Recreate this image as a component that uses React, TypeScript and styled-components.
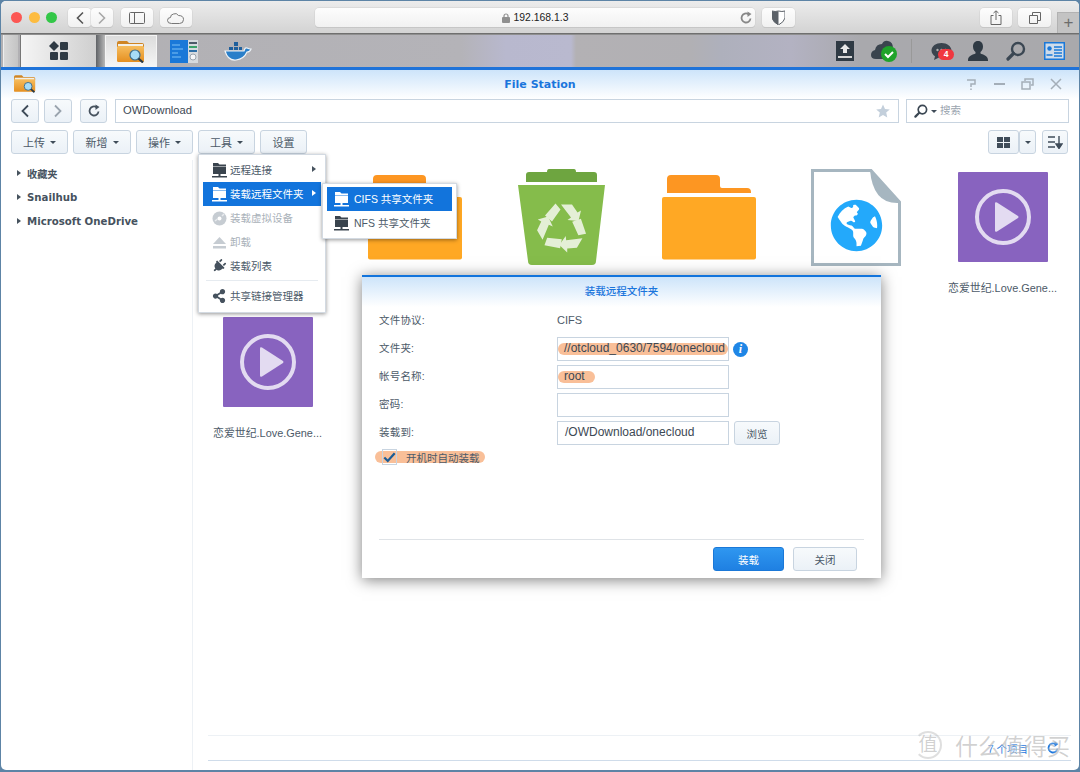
import React from 'react';
import styled, { createGlobalStyle } from 'styled-components';
import { FaGlobeAmericas, FaPlug, FaShareAlt } from 'react-icons/fa';

const CJK = `"Liberation Sans", "Noto Sans CJK SC", sans-serif`;
const WIDE = `"DejaVu Sans", "Noto Sans CJK SC", sans-serif`;

const GlobalStyle = createGlobalStyle`
    html, body {
        margin: 0;
        padding: 0;
        background: #5d84a6;
        overflow: hidden;
    }
    * {
        box-sizing: border-box;
    }
`;

const Page = styled.div`
    width: 1080px;
    height: 772px;
    padding: 1px 1px 2px;
    font-family: ${CJK};
    color: #4c5a68;
`;

const Shell = styled.div`
    height: 100%;
    display: flex;
    flex-direction: column;
    background: #fff;
    border-radius: 5px;
    overflow: hidden;
`;

/* safari chrome */
const SafariBar = styled.div`
    height: 33px;
    flex: none;
    display: flex;
    align-items: flex-start;
    padding: 7px 0 0 10px;
    background: linear-gradient(#ececec, #d3d3d3);
    border-bottom: 1px solid #6f6f6f;
    position: relative;
`;

const Lights = styled.div`
    display: flex;
    gap: 6.5px;
    margin: 3.5px 11px 0 0;
`;

const Light = styled.span<{ $c: string }>`
    width: 11px;
    height: 11px;
    border-radius: 50%;
    background: ${(p) => p.$c};
`;

const SafariBtn = styled.div<{ $w: number; $ml?: number }>`
    width: ${(p) => p.$w}px;
    height: 19px;
    margin-left: ${(p) => p.$ml ?? 0}px;
    flex: none;
    display: flex;
    align-items: center;
    justify-content: center;
    background: linear-gradient(#fdfdfd, #f1f1f1);
    border-radius: 4px;
    box-shadow: 0 0 0 0.5px #cfcfcf, 0 1px 0 #bdbdbd;
`;

const AddressBar = styled(SafariBtn)`
    position: relative;
    gap: 4px;
    font-size: 10.4px;
    color: #222;
`;

const Reload = styled.span`
    position: absolute;
    right: 2px;
    top: 3px;
    display: flex;
`;

const NewTab = styled.div`
    position: absolute;
    right: 0;
    top: 11px;
    width: 22px;
    height: 21px;
    background: #c3c3c3;
    border: 1px solid #b2b2b2;
    border-right: 0;
    border-bottom: 0;
    color: #6c6c6c;
    font-size: 17px;
    line-height: 19px;
    text-align: center;
`;

/* dsm taskbar */
const Taskbar = styled.div`
    height: 36px;
    flex: none;
    display: flex;
    align-items: stretch;
    background: linear-gradient(
        90deg,
        #b1b0b3 0,
        #b4b3b8 460px,
        #b8b8ce 505px,
        #b9b9cf 570px,
        #b3b1b4 575px,
        #b1b0b4 690px,
        #aeb0bc 720px,
        #b3b2c2 790px,
        #a9a9ad 860px,
        #a9a9ac 100%
    );
    border-top: 1px solid #8f8f8f;
    border-bottom: 3px solid #1f73d9;
`;

const ShortTile = styled.div`
    width: 15px;
    margin-left: 2px;
    background: linear-gradient(90deg, #d8d8d8, #c4c4c4);
    border-left: 1px solid #eee;
`;

const MainTile = styled.div`
    width: 76px;
    margin-left: 2px;
    display: flex;
    align-items: center;
    justify-content: center;
    background: linear-gradient(90deg, #f5f5f5, #cfcfcf);
    border-left: 1px solid #777;
`;

const TileGap = styled.div`
    width: 9px;
    background: linear-gradient(90deg, #5f6266, #b8b8b8);
`;

const ActiveTile = styled.div`
    width: 52px;
    display: flex;
    align-items: center;
    justify-content: center;
    background: linear-gradient(#dcdcdc, #f6f6f6);
    border: 1px solid #f4f4f4;
    border-bottom: 0;
`;

const AppSlot = styled.div`
    width: 54px;
    display: flex;
    align-items: center;
    justify-content: center;
`;

const Tray = styled.div`
    margin-left: auto;
    display: flex;
    align-items: center;
    padding-right: 14px;
`;

const TrayIcon = styled.div<{ $w: number; $ml?: number }>`
    width: ${(p) => p.$w}px;
    height: 26px;
    margin-left: ${(p) => p.$ml ?? 0}px;
    position: relative;
    display: flex;
    align-items: center;
    justify-content: center;
`;

const TrayDivider = styled.div`
    width: 1px;
    height: 24px;
    margin-left: 14px;
    background: #999;
`;

const Badge = styled.span`
    position: absolute;
    left: 8px;
    top: 11px;
    width: 16px;
    height: 11px;
    border-radius: 6px;
    background: #f0373f;
    color: #fff;
    font-size: 8.5px;
    font-weight: 700;
    line-height: 11px;
    text-align: center;
`;

/* file station window */
const FileWindow = styled.div`
    flex: 1;
    min-height: 0;
    display: flex;
    flex-direction: column;
    position: relative;
`;

const TitleBar = styled.div`
    height: 29px;
    flex: none;
    display: flex;
    align-items: center;
    justify-content: center;
    position: relative;
    background: linear-gradient(#cde4fa, #ffffff);
`;

const TitleIcon = styled.span`
    position: absolute;
    left: 13px;
    top: 5px;
    display: flex;
`;

const TitleText = styled.div`
    font-family: ${WIDE};
    font-size: 11px;
    font-weight: 700;
    color: #1a75dc;
`;

const WinActions = styled.div`
    position: absolute;
    right: 16px;
    top: 7px;
    display: flex;
    gap: 14px;
`;

const PathRow = styled.div`
    height: 24px;
    flex: none;
    display: flex;
    padding: 0 10px;
`;

const Square = styled.div<{ $ml?: number; $w?: number }>`
    width: ${(p) => p.$w ?? 28}px;
    height: 24px;
    margin-left: ${(p) => p.$ml ?? 0}px;
    flex: none;
    display: flex;
    align-items: center;
    justify-content: center;
    background: linear-gradient(#f7fafc, #ebf1f7);
    border: 1px solid #c8d4e0;
    border-radius: 3px;
`;

const PathField = styled.div`
    flex: 1;
    margin-left: 8px;
    padding: 0 8px 0 7px;
    display: flex;
    align-items: center;
    justify-content: space-between;
    background: #fff;
    border: 1px solid #c8d4e0;
    font-size: 11.2px;
    color: #3c4854;
`;

const PathText = styled.span`
    padding-bottom: 2px;
`;

const SearchField = styled.div`
    width: 163px;
    margin-left: 7px;
    padding-left: 7px;
    display: flex;
    align-items: center;
    gap: 3px;
    border: 1px solid #c8d4e0;
    font-size: 10.5px;
    color: #9aa4ae;
`;

const SearchHint = styled.span`
    padding-bottom: 3px;
`;

const ToolRow = styled.div`
    height: 24px;
    flex: none;
    margin-top: 7px;
    display: flex;
    gap: 5px;
    padding: 0 11px 0 10px;
`;

const ToolBtn = styled.div<{ $w: number }>`
    width: ${(p) => p.$w}px;
    display: flex;
    align-items: center;
    justify-content: center;
    gap: 5px;
    background: linear-gradient(#f7fafc, #ebf1f7);
    border: 1px solid #c8d4e0;
    border-radius: 3px;
    font-size: 11px;
    color: #4c5a68;
`;

const Caret = styled.span<{ $c?: string }>`
    width: 0;
    height: 0;
    border-left: 3px solid transparent;
    border-right: 3px solid transparent;
    border-top: 3px solid ${(p) => p.$c ?? '#3f4c59'};
`;

const ToolRight = styled.div`
    margin-left: auto;
    display: flex;
`;

const Body = styled.div`
    flex: 1;
    min-height: 0;
    display: flex;
`;

const Sidebar = styled.div`
    width: 192px;
    flex: none;
    margin-top: 6px;
    padding-top: 1px;
    border-right: 1px solid #edf1f5;
`;

const TreeItem = styled.div`
    height: 24px;
    padding-left: 16px;
    display: flex;
    align-items: center;
    gap: 6px;
    font-family: ${WIDE};
    font-size: 10.2px;
    font-weight: 700;
    color: #46525e;
`;

const TreeArrow = styled.span<{ $c?: string }>`
    width: 0;
    height: 0;
    border-top: 3.5px solid transparent;
    border-bottom: 3.5px solid transparent;
    border-left: 4px solid ${(p) => p.$c ?? '#46525e'};
`;

const Main = styled.div`
    flex: 1;
    min-width: 0;
    display: flex;
    flex-direction: column;
`;

const FileGrid = styled.div`
    flex: 1;
    display: grid;
    grid-template-columns: repeat(6, 147px);
    grid-auto-rows: 145px;
    padding: 6px 0 0 1px;
`;

const FileCell = styled.div`
    padding-top: 7px;
    display: flex;
    flex-direction: column;
    align-items: center;
`;

const FileThumb = styled.div`
    height: 100px;
    display: flex;
    align-items: center;
    justify-content: center;
`;

const FileName = styled.div`
    margin-top: 13px;
    font-size: 10.9px;
    line-height: 16px;
    white-space: nowrap;
    color: #4c5a68;
`;

const StatusBar = styled.div`
    height: 26px;
    flex: none;
    margin: 0 8px 9px 15px;
    display: flex;
    align-items: center;
    justify-content: flex-end;
    gap: 18px;
    padding-right: 11px;
    border-top: 1px solid #edf1f5;
    border-bottom: 1px solid #cfdcea;
    font-size: 10.5px;
    color: #1a75dc;
`;

const Watermark = styled.div`
    position: absolute;
    right: 9px;
    bottom: 8px;
    display: flex;
    align-items: center;
    gap: 13px;
    font-size: 23px;
    color: rgba(110, 110, 110, 0.32);
    text-shadow: 0 0 2px rgba(255, 255, 255, 0.9);
`;

const WatermarkSeal = styled.span`
    width: 28px;
    height: 28px;
    border: 2px solid rgba(140, 140, 140, 0.28);
    border-left-color: transparent;
    border-radius: 50%;
    font-size: 19px;
    line-height: 23px;
    text-align: center;
`;

/* menus */
const Menu = styled.div`
    position: absolute;
    left: 197px;
    top: 84px;
    width: 128px;
    height: 159px;
    padding: 3px 4px;
    background: #fff;
    border: 1px solid #d3dae2;
    box-shadow: 0 1px 4px rgba(0, 0, 0, 0.42);
    z-index: 3;
`;

const MenuRow = styled.div<{ $active?: boolean; $off?: boolean }>`
    height: 24px;
    padding: 0 5px 2px 9px;
    display: flex;
    align-items: center;
    gap: 3px;
    font-size: 10.5px;
    white-space: nowrap;
    background: ${(p) => (p.$active ? '#1274dc' : 'transparent')};
    color: ${(p) => (p.$active ? '#fff' : p.$off ? '#a9b1b9' : '#4c5a68')};
`;

const MenuRule = styled.div`
    height: 1px;
    margin: 2px 3px 3px;
    background: #e6ebf0;
`;

const RowArrow = styled.span`
    margin-left: auto;
    display: flex;
`;

const SubMenu = styled(Menu)`
    left: 321px;
    top: 113px;
    width: 135px;
    height: 56px;
    z-index: 4;
`;

const SubRow = styled(MenuRow)`
    gap: 5px;
    padding-left: 7px;
`;

/* mount dialog */
const Dialog = styled.div`
    position: absolute;
    left: 361px;
    top: 205px;
    width: 519px;
    height: 303px;
    display: flex;
    flex-direction: column;
    background: #fff;
    border-top: 2px solid #1274dc;
    box-shadow: 0 2px 14px rgba(0, 0, 0, 0.5);
    z-index: 2;
`;

const DialogHead = styled.div`
    height: 30px;
    flex: none;
    padding-bottom: 3px;
    display: flex;
    align-items: center;
    justify-content: center;
    background: linear-gradient(#cde4fa, #ffffff);
    font-size: 10.5px;
    font-weight: 500;
    color: #1a75dc;
`;

const DialogForm = styled.div`
    flex: 1;
    padding: 2px 17px 0;
    display: flex;
    flex-direction: column;
`;

const FormRow = styled.div`
    height: 24px;
    margin-bottom: 4px;
    display: flex;
    align-items: center;
    font-size: 10.5px;
`;

const FormLabel = styled.div`
    width: 178px;
    flex: none;
    padding-bottom: 4px;
    color: #4c5a68;
    letter-spacing: 0.2px;
`;

const FormValue = styled.div`
    padding-bottom: 3px;
    font-size: 11px;
    color: #4c5a68;
`;

const Field = styled.div`
    width: 172px;
    height: 24px;
    flex: none;
    display: flex;
    align-items: center;
    border: 1px solid #c8d4e0;
    font-size: 12px;
    color: #3c4854;
    white-space: nowrap;
    overflow: hidden;
`;

const Plain = styled.span`
    padding: 0 0 3px 7px;
`;

const Marked = styled.span<{ $w: string }>`
    width: ${(p) => p.$w};
    height: 12px;
    flex: none;
    padding-left: 6px;
    border-radius: 6px;
    background: #f9bf98;
    line-height: 11px;
`;

const InfoDot = styled.span`
    width: 15px;
    height: 15px;
    margin-left: 4px;
    border-radius: 50%;
    background: #1f86e6;
    color: #fff;
    font-family: "Liberation Serif", serif;
    font-style: italic;
    font-weight: 700;
    font-size: 12px;
    line-height: 15px;
    text-align: center;
`;

const BrowseBtn = styled(ToolBtn)`
    height: 24px;
    margin-left: 5px;
    font-size: 10.5px;
`;

const CheckRow = styled.div`
    width: 110px;
    height: 12px;
    margin: 2px 0 0 -4px;
    display: flex;
    align-items: center;
    border-radius: 6px;
    background: #f9bf98;
    font-size: 10.5px;
    color: #4c5a68;
`;

const CheckBox = styled.span`
    width: 15px;
    height: 16px;
    margin-left: 7px;
    margin-right: 9px;
    display: flex;
    align-items: center;
    justify-content: center;
    border: 1px solid #c8d4e0;
`;

const DialogFoot = styled.div`
    height: 39px;
    flex: none;
    margin: 0 17px 0;
    display: flex;
    justify-content: flex-end;
    align-items: flex-start;
    gap: 9px;
    padding: 7px 7px 0 0;
    border-top: 1px solid #dfe3e7;
`;

const PrimaryBtn = styled.div`
    width: 71px;
    height: 24px;
    display: flex;
    align-items: center;
    justify-content: center;
    border-radius: 3px;
    border: 1px solid #1a78d8;
    background: linear-gradient(#2f97f0, #1f80e2);
    color: #fff;
    font-size: 10.5px;
`;

const FootBtn = styled(ToolBtn)`
    height: 24px;
    font-size: 10.5px;
`;

/* drawings */
const Chevron = ({ dir, c = '#555', s = 1.6 }: { dir: 'l' | 'r'; c?: string; s?: number }) => (
    <svg width="10" height="14" viewBox="0 0 10 14">
        <path d={dir === 'l' ? 'M8 1.5 2.5 7 8 12.5' : 'M2 1.5 7.5 7 2 12.5'} fill="none" stroke={c} strokeWidth={s} />
    </svg>
);

const Magnifier = ({ size = 20, c = '#3b4753' }: { size?: number; c?: string }) => (
    <svg width={size} height={size} viewBox="0 0 20 20">
        <circle cx="12" cy="8" r="6" fill="none" stroke={c} strokeWidth="2.4" />
        <path d="M7.5 12.5 2 18" stroke={c} strokeWidth="3.2" strokeLinecap="round" />
    </svg>
);

const FolderSearch = ({ w = 28, h = 22 }: { w?: number; h?: number }) => (
    <svg width={w} height={h} viewBox="0 0 28 22">
        <defs>
            <linearGradient id="fs" x1="0" y1="0" x2="0" y2="1">
                <stop offset="0" stopColor="#f6bd5e" />
                <stop offset="1" stopColor="#e58f20" />
            </linearGradient>
        </defs>
        <path d="M0 2q0-2 2-2h8l2 2h13q2 0 2 2v2H0z" fill="#cf8524" />
        <rect x="1" y="3" width="25" height="3" fill="#f3f0e8" />
        <rect x="0" y="5" width="27" height="16" rx="1.5" fill="url(#fs)" />
        <circle cx="18" cy="14" r="5" fill="#a6dcf7" stroke="#3f6f8e" strokeWidth="1.2" />
        <path d="M21.5 17.5 26 21.5" stroke="#2c3a44" strokeWidth="2.2" />
    </svg>
);

const MainMenuIcon = () => (
    <svg width="20" height="20" viewBox="0 0 20 20">
        <path d="M5 0 10 5 5 10 0 5z" fill="#2f3a44" />
        <rect x="11" y="1" width="8" height="8" rx="1" fill="#2f3a44" />
        <rect x="1" y="11" width="8" height="8" rx="1" fill="#2f3a44" />
        <rect x="11" y="11" width="8" height="8" rx="1" fill="#2f3a44" />
    </svg>
);

const EditorIcon = () => (
    <svg width="28" height="23" viewBox="0 0 28 23">
        <rect width="18" height="23" fill="#1a78d8" />
        <rect x="18" width="10" height="23" fill="#d6dade" />
        <path d="M2 5h8M2 9h11M2 13h6M2 17h9" stroke="#7cc0f5" strokeWidth="1" />
        <rect x="19" y="2" width="8" height="2" fill="#4c5a68" />
        <rect x="19" y="6" width="8" height="2" fill="#3aa36a" />
        <rect x="19" y="10" width="8" height="2" fill="#2d6fa8" />
        <circle cx="23" cy="17" r="3" fill="#f4f6f8" stroke="#9aa4ae" />
    </svg>
);

const DockerIcon = () => (
    <svg width="28" height="22" viewBox="0 0 28 22">
        <path d="M1 11h19q1-4 3-3 2 1 4 1-1 3-4 3-3 7-11 8-8 1-11-9z" fill="#2a7fc9" stroke="#eef3f7" strokeWidth="1.2" />
        <path d="M5 7h4v3H5zM10 7h4v3h-4zM15 7h3v3h-3zM10 2h4v4h-4z" fill="#1f5f9c" />
    </svg>
);

const UploadDrive = () => (
    <svg width="18" height="20" viewBox="0 0 18 20">
        <rect width="18" height="20" fill="#2f3a44" />
        <path d="M9 3 14 8h-3v4H7V8H4z" fill="#e8e8e8" />
        <rect x="2" y="15" width="14" height="2" fill="#d6d6d6" />
    </svg>
);

const CloudCheck = () => (
    <svg width="26" height="24" viewBox="0 0 26 24">
        <path d="M5 20q-5 0-5-4 0-4 4-5 1-6 7-6 2-4 6-3 5 1 5 7 3 2 1 6l-4 5z" fill="#3a444e" />
        <circle cx="18" cy="15" r="8" fill="#1fa32a" />
        <path d="M14 15l3 3 5-5" fill="none" stroke="#fff" strokeWidth="2" />
    </svg>
);

const ChatIcon = () => (
    <svg width="21" height="19" viewBox="0 0 21 19">
        <path d="M10.5 1C5 1 .5 4 .5 8.500c0 2.500 1.500 4.500 3.500 5.800L3 18l5-2.500c8 1 12.500-3 12.500-7S16 1 10.500 1z" fill="#3a444e" />
        <circle cx="6.500" cy="8" r="1.200" fill="#b0b0b0" />
        <circle cx="10.500" cy="8" r="1.200" fill="#b0b0b0" />
        <circle cx="14.500" cy="8" r="1.200" fill="#b0b0b0" />
    </svg>
);

const UserIcon = () => (
    <svg width="20" height="20" viewBox="0 0 20 20">
        <path d="M10 0c3.500 0 5 2.500 5 5.500 0 2.500-1 4.500-2.500 5.500v1.500c2 1 7.500 2 7.500 6.500V20H0v-1c0-4.500 5.500-5.500 7.500-6.500V11C6 10 5 8 5 5.500 5 2.500 6.500 0 10 0z" fill="#2f3a44" />
    </svg>
);

const CardIcon = () => (
    <svg width="21" height="18" viewBox="0 0 21 18">
        <rect x=".75" y=".75" width="19.500" height="16.500" fill="#cfdcea" stroke="#1a78d8" strokeWidth="1.500" />
        <circle cx="5.500" cy="6.500" r="2.200" fill="#1a78d8" />
        <path d="M2.500 13h6M10 5h8M10 8h8M10 11h8M10 14h8" stroke="#1a78d8" strokeWidth="1.300" />
    </svg>
);

const HelpGlyph = () => (
    <svg width="14" height="14" viewBox="0 0 14 14">
        <path d="M2 3h8v4H6v3M6 11.500v1.500" fill="none" stroke="#a4aeb8" strokeWidth="1.500" />
    </svg>
);

const MinGlyph = () => (
    <svg width="14" height="14" viewBox="0 0 14 14">
        <rect x="1" y="6" width="11" height="2" fill="#a4aeb8" />
    </svg>
);

const RestoreGlyph = () => (
    <svg width="14" height="14" viewBox="0 0 14 14">
        <path d="M1 5h8v7H1zM4 4V2h8v6h-2" fill="none" stroke="#a4aeb8" strokeWidth="1.500" />
    </svg>
);

const CloseGlyph = () => (
    <svg width="14" height="14" viewBox="0 0 14 14">
        <path d="M2 2l10 10M12 2 2 12" stroke="#a4aeb8" strokeWidth="1.500" />
    </svg>
);

const RefreshGlyph = ({ c = '#46525e', size = 14 }: { c?: string; size?: number }) => (
    <svg width={size} height={size} viewBox="0 0 14 14">
        <path d="M11.500 7.500A4.500 4.500 0 1 1 9.500 3.200" fill="none" stroke={c} strokeWidth="1.800" />
        <path d="M8.500.5 12.500 3 8.500 6z" fill={c} />
    </svg>
);

const NetFolder = ({ c = '#3a444e' }: { c?: string }) => (
    <svg width="15" height="15" viewBox="0 0 15 15" style={{ flex: 'none', marginTop: 2 }}>
        <path d="M1 0h5l1.500 1.500H14V3H1z" fill={c} />
        <rect x="1" y="3.500" width="13" height="7.500" fill={c} />
        <rect x="6.500" y="11" width="2" height="2" fill={c} />
        <rect x="0" y="13" width="15" height="1.500" fill={c} />
    </svg>
);

const DiscIcon = () => (
    <svg width="15" height="15" viewBox="0 0 15 15" style={{ flex: 'none', marginTop: 2 }}>
        <circle cx="7.500" cy="7.500" r="7" fill="#c6ccd2" />
        <circle cx="7.500" cy="7.500" r="2" fill="#fff" />
        <path d="M3 10 5.500 8M10 5l2-2" stroke="#e8ebee" strokeWidth="1.500" />
    </svg>
);

const EjectIcon = () => (
    <svg width="15" height="15" viewBox="0 0 15 15" style={{ flex: 'none', marginTop: 2 }}>
        <path d="M7.500 2 14 9H1z" fill="#c6ccd2" />
        <rect x="1" y="11" width="13" height="2.500" fill="#c6ccd2" />
    </svg>
);

const RECYCLE_UNIT = 'M-17 -12L-6.500 -24L-1.500 -18L-10 -6ZM-1 -23H10L15.500 -15L19 -17L16.500 -6.500L5.500 -7.500L9 -10Z';

const TrashFile = () => (
    <svg width="87" height="96" viewBox="0 0 87 96">
        <path d="M31 0h25q2 0 2 3H76q3 0 3 3v7H8V6q0-3 3-3h18q0-3 2-3z" fill="#6ea540" />
        <path d="M0 16h87l-9 76q0 4-4 4H14q-4 0-4-4z" fill="#85bc4b" />
        <g transform="translate(44 58.500)" fill="#e4efd6">
            <path d={RECYCLE_UNIT} />
            <path d={RECYCLE_UNIT} transform="rotate(120)" />
            <path d={RECYCLE_UNIT} transform="rotate(240)" />
        </g>
    </svg>
);

const OrangeFolder = () => (
    <svg width="94" height="85" viewBox="0 0 94 85">
        <path d="M5 4q0-4 4-4h45q4 0 4 4v7q0 2 2 2h25q4 0 4 4v6H5z" fill="#fd9622" />
        <rect x="5" y="18" width="84" height="6" fill="#fff" />
        <rect y="22" width="94" height="62.500" rx="2" fill="#ffa824" />
    </svg>
);

const WebDoc = () => (
    <svg width="90" height="97" viewBox="0 0 90 97">
        <path d="M1.500 1.500H60L88.500 33V95.500H1.500z" fill="#fff" stroke="#a6b6c0" strokeWidth="3" />
        <path d="M59 1 89 34Q62 36 59 1z" fill="#a6b6c0" />
        <FaGlobeAmericas x="19" y="30" size="53" color="#23a9fb" />
    </svg>
);

const VideoThumb = () => (
    <svg width="90" height="90" viewBox="0 0 90 90">
        <rect width="90" height="90" rx="1" fill="#8863bf" />
        <circle cx="45" cy="45" r="26" fill="none" stroke="#e3dbf1" strokeWidth="4" />
        <path d="M37 31.500q0-2 2-1l21 13.500q1 1 0 2L39 59.500q-2 1-2-1z" fill="#e3dbf1" />
    </svg>
);

const menuIconColor = '#46525e';

export default function App() {
    return (
        <Page>
            <GlobalStyle />
            <Shell>
                <SafariBar>
                    <Lights>
                        <Light $c="#fc5753" />
                        <Light $c="#fdbc40" />
                        <Light $c="#33c748" />
                    </Lights>
                    <SafariBtn $w={23}><Chevron dir="l" /></SafariBtn>
                    <SafariBtn $w={22}><Chevron dir="r" c="#a8a8a8" /></SafariBtn>
                    <SafariBtn $w={32} $ml={8}>
                        <svg width="16" height="12" viewBox="0 0 16 12">
                            <rect x=".5" y=".5" width="15" height="11" rx="1" fill="none" stroke="#666" />
                            <path d="M5.500.5v11" stroke="#666" />
                        </svg>
                    </SafariBtn>
                    <SafariBtn $w={32} $ml={7}>
                        <svg width="18" height="12" viewBox="0 0 18 12">
                            <path d="M4.500 11.500q-4 0-4-3 0-3 3-3 0-3 3-3.500 3-1.500 5 1.500 5 0 5 4 0 4-4 4z" fill="none" stroke="#777" />
                        </svg>
                    </SafariBtn>
                    <AddressBar $w={440} $ml={123}>
                        <svg width="8" height="10" viewBox="0 0 8 10">
                            <path d="M2 4V3a2 2 0 0 1 4 0v1" fill="none" stroke="#8f8f8f" strokeWidth="1.200" />
                            <rect y="4" width="8" height="6" rx="1" fill="#8f8f8f" />
                        </svg>
                        192.168.1.3
                        <Reload><RefreshGlyph c="#888" /></Reload>
                    </AddressBar>
                    <SafariBtn $w={33} $ml={7}>
                        <svg width="13" height="15" viewBox="0 0 13 15">
                            <path d="M0 1q3 1 6.500 0Q10 2 13 1v7q-1 4-6.500 7Q1 12 0 8z" fill="#fff" stroke="#5b6168" />
                            <path d="M0 1q3 1 6.500 0v14Q1 12 0 8z" fill="#5b6168" />
                        </svg>
                    </SafariBtn>
                    <SafariBtn $w={32} $ml={185}>
                        <svg width="12" height="15" viewBox="0 0 12 15">
                            <path d="M3.500 5.500H1v9h10v-9H8.500M6 10V1M3.500 3 6 .8 8.500 3" fill="none" stroke="#666" />
                        </svg>
                    </SafariBtn>
                    <SafariBtn $w={33} $ml={6}>
                        <svg width="12" height="12" viewBox="0 0 12 12">
                            <path d="M.5 3.500h8v8h-8zM3.500 3.500v-3h8v8h-3" fill="none" stroke="#666" />
                        </svg>
                    </SafariBtn>
                    <NewTab>+</NewTab>
                </SafariBar>

                <Taskbar>
                    <ShortTile />
                    <MainTile><MainMenuIcon /></MainTile>
                    <TileGap />
                    <ActiveTile><FolderSearch /></ActiveTile>
                    <AppSlot><EditorIcon /></AppSlot>
                    <AppSlot><DockerIcon /></AppSlot>
                    <Tray>
                        <TrayIcon $w={18}><UploadDrive /></TrayIcon>
                        <TrayIcon $w={26} $ml={17}><CloudCheck /></TrayIcon>
                        <TrayDivider />
                        <TrayIcon $w={23} $ml={18}>
                            <ChatIcon />
                            <Badge>4</Badge>
                        </TrayIcon>
                        <TrayIcon $w={20} $ml={15}><UserIcon /></TrayIcon>
                        <TrayIcon $w={20} $ml={18}><Magnifier /></TrayIcon>
                        <TrayIcon $w={21} $ml={18}><CardIcon /></TrayIcon>
                    </Tray>
                </Taskbar>

                <FileWindow>
                    <TitleBar>
                        <TitleIcon><FolderSearch w={22} h={18} /></TitleIcon>
                        <TitleText>File Station</TitleText>
                        <WinActions>
                            <HelpGlyph />
                            <MinGlyph />
                            <RestoreGlyph />
                            <CloseGlyph />
                        </WinActions>
                    </TitleBar>

                    <PathRow>
                        <Square><Chevron dir="l" c="#3f4c59" s={1.8} /></Square>
                        <Square $ml={5}><Chevron dir="r" c="#9aa4ae" s={1.8} /></Square>
                        <Square $ml={8} $w={27}><RefreshGlyph /></Square>
                        <PathField>
                            <PathText>OWDownload</PathText>
                            <svg width="14" height="14" viewBox="0 0 14 14">
                                <path d="M7 .5 9 5l4.800.4-3.600 3.200L11.300 13.500 7 11 2.700 13.500 3.800 8.600.2 5.400 5 5z" fill="#c3cfdb" />
                            </svg>
                        </PathField>
                        <SearchField>
                            <Magnifier size={14} />
                            <Caret />
                            <SearchHint>搜索</SearchHint>
                        </SearchField>
                    </PathRow>

                    <ToolRow>
                        <ToolBtn $w={57}>上传 <Caret /></ToolBtn>
                        <ToolBtn $w={58}>新增 <Caret /></ToolBtn>
                        <ToolBtn $w={57}>操作 <Caret /></ToolBtn>
                        <ToolBtn $w={57}>工具 <Caret /></ToolBtn>
                        <ToolBtn $w={47}>设置</ToolBtn>
                        <ToolRight>
                            <Square $w={31}>
                                <svg width="13" height="11" viewBox="0 0 13 11">
                                    <path d="M0 0h6v5H0zM7 0h6v5H7zM0 6h6v5H0zM7 6h6v5H7z" fill="#3f4c59" />
                                </svg>
                            </Square>
                            <Square $w={17}><Caret /></Square>
                            <Square $w={26} $ml={6}>
                                <svg width="15" height="13" viewBox="0 0 15 13">
                                    <path d="M0 1h7M0 6h7M0 11h7" stroke="#3f4c59" strokeWidth="1.600" />
                                    <path d="M11 0v8M8 8h6l-3 4.500z" stroke="#3f4c59" fill="#3f4c59" strokeWidth="1.400" />
                                </svg>
                            </Square>
                        </ToolRight>
                    </ToolRow>

                    <Body>
                        <Sidebar>
                            <TreeItem><TreeArrow />收藏夹</TreeItem>
                            <TreeItem><TreeArrow />Snailhub</TreeItem>
                            <TreeItem><TreeArrow />Microsoft OneDrive</TreeItem>
                        </Sidebar>
                        <Main>
                            <FileGrid>
                                <FileCell />
                                <FileCell><FileThumb><OrangeFolder /></FileThumb></FileCell>
                                <FileCell><FileThumb><TrashFile /></FileThumb></FileCell>
                                <FileCell><FileThumb><OrangeFolder /></FileThumb></FileCell>
                                <FileCell><FileThumb><WebDoc /></FileThumb></FileCell>
                                <FileCell>
                                    <FileThumb><VideoThumb /></FileThumb>
                                    <FileName>恋爱世纪.Love.Gene...</FileName>
                                </FileCell>
                                <FileCell>
                                    <FileThumb><VideoThumb /></FileThumb>
                                    <FileName>恋爱世纪.Love.Gene...</FileName>
                                </FileCell>
                            </FileGrid>
                            <StatusBar>
                                <span>7 个项目</span>
                                <RefreshGlyph c="#1a75dc" />
                            </StatusBar>
                        </Main>
                    </Body>

                    <Watermark>
                        <WatermarkSeal>值</WatermarkSeal>
                        <span>什么值得买</span>
                    </Watermark>

                    <Menu>
                        <MenuRow>
                            <NetFolder />远程连接
                            <RowArrow><TreeArrow /></RowArrow>
                        </MenuRow>
                        <MenuRow $active>
                            <NetFolder c="#fff" />装载远程文件夹
                            <RowArrow><TreeArrow $c="#fff" /></RowArrow>
                        </MenuRow>
                        <MenuRow $off><DiscIcon />装载虚拟设备</MenuRow>
                        <MenuRow $off><EjectIcon />卸载</MenuRow>
                        <MenuRow><FaPlug size={14} color={menuIconColor} style={{ transform: 'rotate(45deg)', flex: 'none', marginRight: 1, marginTop: 2 }} />装载列表</MenuRow>
                        <MenuRule />
                        <MenuRow><FaShareAlt size={14} color={menuIconColor} style={{ flex: 'none', marginRight: 1, marginTop: 2 }} />共享链接管理器</MenuRow>
                    </Menu>

                    <SubMenu>
                        <SubRow $active><NetFolder c="#fff" />CIFS 共享文件夹</SubRow>
                        <SubRow><NetFolder />NFS 共享文件夹</SubRow>
                    </SubMenu>

                    <Dialog>
                        <DialogHead>装载远程文件夹</DialogHead>
                        <DialogForm>
                            <FormRow>
                                <FormLabel>文件协议:</FormLabel>
                                <FormValue>CIFS</FormValue>
                            </FormRow>
                            <FormRow>
                                <FormLabel>文件夹:</FormLabel>
                                <Field><Marked $w="100%">//otcloud_0630/7594/onecloud</Marked></Field>
                                <InfoDot>i</InfoDot>
                            </FormRow>
                            <FormRow>
                                <FormLabel>帐号名称:</FormLabel>
                                <Field><Marked $w="37px">root</Marked></Field>
                            </FormRow>
                            <FormRow>
                                <FormLabel>密码:</FormLabel>
                                <Field />
                            </FormRow>
                            <FormRow>
                                <FormLabel>装载到:</FormLabel>
                                <Field><Plain>/OWDownload/onecloud</Plain></Field>
                                <BrowseBtn $w={46}>浏览</BrowseBtn>
                            </FormRow>
                            <CheckRow>
                                <CheckBox>
                                    <svg width="15" height="13" viewBox="0 0 15 13">
                                        <path d="M1.500 6.500 5.500 10.500 13.500 1.500" fill="none" stroke="#1b5c96" strokeWidth="2.600" />
                                    </svg>
                                </CheckBox>
                                开机时自动装载
                            </CheckRow>
                        </DialogForm>
                        <DialogFoot>
                            <PrimaryBtn>装载</PrimaryBtn>
                            <FootBtn $w={64}>关闭</FootBtn>
                        </DialogFoot>
                    </Dialog>
                </FileWindow>
            </Shell>
        </Page>
    );
}
